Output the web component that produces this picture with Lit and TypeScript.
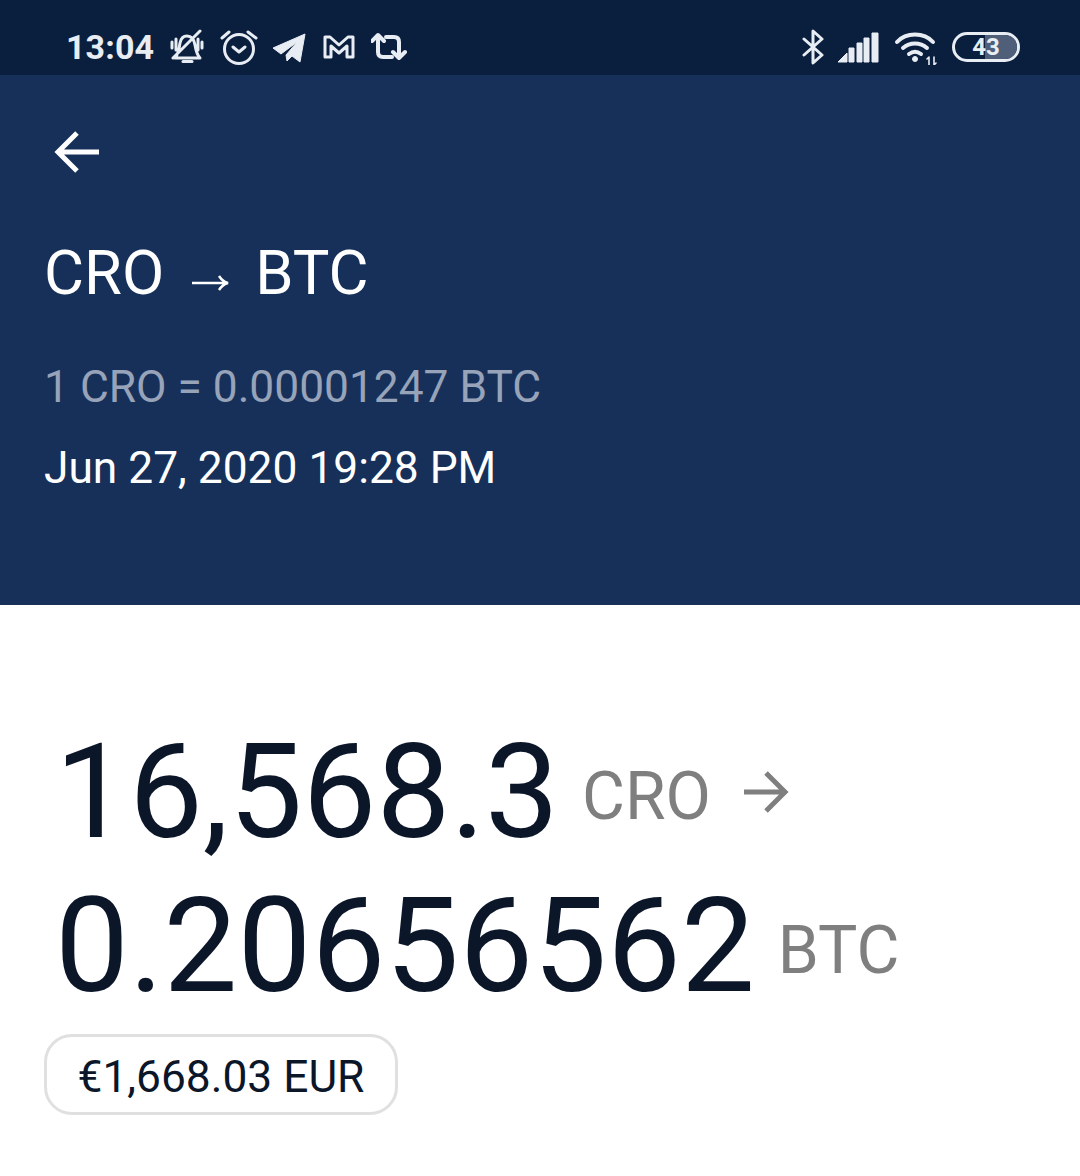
import { LitElement, html, css } from "lit";
import { customElement } from "lit/decorators.js";

@customElement("app-root")
export class AppRoot extends LitElement {
  static styles = css`
    :host { display: block; width: 1080px; height: 1176px; background: #fff; font-family: Roboto, "Liberation Sans", sans-serif; overflow: hidden; }
    .status { height: 75px; box-sizing: border-box; background: #0a1f3e; color: #e8edf4; display: flex; align-items: center; padding: 19px 60px 0 66px; }
    .time { font-size: 34px; font-weight: 700; width: 104px; line-height: 1; margin-top: 0; letter-spacing: 0.1px; }
    .icons { display: flex; align-items: center; }
    .spacer { flex: 1; }
    svg { display: block; flex: none; }
    .st { fill: none; stroke: #e8edf4; stroke-linecap: round; stroke-linejoin: round; stroke-width: 3; }
    .th { stroke-width: 4; }
    .tn { stroke-width: 1.6; }
    .sf { fill: #e8edf4; stroke: #e8edf4; stroke-width: 1; stroke-linejoin: round; }
    .alarm { margin-left: 14px; }
    .plane { margin-left: 14px; }
    .gm { margin-left: 15px; }
    .rt { margin-left: 16px; }
    .sig { margin-left: 11px; }
    .wifi { margin-left: 15px; }
    .batt { margin-left: 14px; position: relative; width: 68px; height: 30px; box-sizing: border-box; border: 3px solid #e8edf4; border-radius: 15px; overflow: hidden; display: flex; align-items: center; justify-content: center; font-size: 24px; font-weight: 700; }
    .batt .lvl { position: absolute; left: 30px; top: 0; bottom: 0; right: 0; background: #4f5f7a; }
    .batt span { position: relative; line-height: 1; }
    .header { height: 530px; box-sizing: border-box; background: #17305a; color: #fff; padding: 52px 0 0 44px; }
    .back { margin-left: 9px; }
    .pair { display: flex; align-items: center; font-size: 61.5px; line-height: 70px; margin-top: 61px; }
    .pair svg { margin: 20px 25px 0 28px; }
    .rate { font-size: 44.3px; line-height: 52px; color: #97a3b9; margin-top: 53px; }
    .date { font-size: 44.3px; line-height: 52px; margin-top: 29px; }
    .main { padding: 110px 0 0 44px; }
    .row { display: flex; align-items: center; color: #0b1629; height: 154px; }
    .big { font-size: 131.5px; line-height: 154px; margin-left: 11px; }
    .unit { font-size: 66px; line-height: 76px; padding-top: 10px; color: #7f7f7f; margin-left: 23px; }
    .row svg { margin-left: 33px; margin-top: -1px; }
    .pill { display: inline-block; margin-top: 11px; box-sizing: border-box; height: 81px; width: 354px; border: 3px solid #e0e0e0; border-radius: 28px; font-size: 44.3px; line-height: 81px; text-align: center; color: #0b1629; }
  `;
  render() {
    return html`
      <div class="status">
        <div class="time">13:04</div>
        <div class="icons">
          <svg width="36" height="36" viewBox="0 0 36 36">
            <path class="st" d="M5 29h25c-3-3-4-7-5-13-1-6-4-9-8-9-3 0-6 2-7 7-1 7-2 12-5 15M3 29 30 2M2 13v6M6 10v11M28 10v11M32 13v6"/>
            <path class="st" d="M13 32.5h9"/>
          </svg>
          <svg class="alarm" width="38" height="36" viewBox="0 0 38 36">
            <circle class="st" cx="19" cy="20" r="14.5"/>
            <path class="st" d="M13 18l6 5 6-5M2 9l7-6M36 9l-8-6"/>
          </svg>
          <svg class="plane" width="36" height="36" viewBox="0 0 36 36">
            <path class="sf" d="M33 5 1 19 9 25 25 13 14 26 15 32 20 27 28 33Z"/>
          </svg>
          <svg class="gm" width="32" height="36" viewBox="0 0 32 36">
            <path class="st" d="M2 8h5l9 8 9-8h5v20h-6V17l-8 7-8-7v11H2Z"/>
          </svg>
          <svg class="rt" width="38" height="36" viewBox="0 0 38 36">
            <path class="st th" d="M7 6V23q0 5 5 5h9M1 12l6-6 6 6M15 8h8q5 0 5 5V29M22 23l6 6 6-6"/>
          </svg>
        </div>
        <div class="spacer"></div>
        <div class="icons">
          <svg width="24" height="36" viewBox="0 0 24 36">
            <path class="st" d="M2 10 20 26 11 34V2l9 8L2 26"/>
          </svg>
          <svg class="sig" width="42" height="36" viewBox="0 0 42 36">
            <path class="sf" d="M1 33l9-9v9ZM12 19h5v14h-5ZM20 14h5v19h-5ZM27 9h5v24h-5ZM35 4h6v29h-6Z"/>
          </svg>
          <svg class="wifi" width="44" height="36" viewBox="0 0 44 36">
            <path class="st th" d="M3 13C12 3 30 3 39 13M9 19c7-6 17-6 24 0M15 25c4-3 8-3 12 0"/>
            <circle class="sf" cx="21" cy="30" r="2.5"/>
            <path class="st tn" d="M35 28v8M33 30l2-2M40 28v8M40 36l2-2"/>
          </svg>
          <div class="batt">
            <div class="lvl"></div>
            <span>43</span>
          </div>
        </div>
      </div>
      <div class="header">
        <svg class="back" width="50" height="50" viewBox="0 0 50 50" fill="none" stroke="#fff" stroke-width="5">
          <path d="M46 25H5M24 6 5 25l19 19"/>
        </svg>
        <div class="pair"><span>CRO</span>
          <svg width="38" height="20" viewBox="0 0 38 20" fill="none" stroke="#fff" stroke-width="2.5"><path d="M0 10h35M27 3c2 3 5 6 9 7-4 1-7 4-9 7"/></svg>
          <span>BTC</span></div>
        <div class="rate">1 CRO = 0.00001247 BTC</div>
        <div class="date">Jun 27, 2020 19:28 PM</div>
      </div>
      <div class="main">
        <div class="row"><span class="big">16,568.3</span><span class="unit">CRO</span>
          <svg width="46" height="46" viewBox="0 0 46 46" fill="none" stroke="#7f7f7f" stroke-width="5"><path d="M0 23h41M22 4l19 19-19 19"/></svg>
        </div>
        <div class="row"><span class="big">0.20656562</span><span class="unit">BTC</span></div>
        <div class="pill">€1,668.03 EUR</div>
      </div>
    `;
  }
}
